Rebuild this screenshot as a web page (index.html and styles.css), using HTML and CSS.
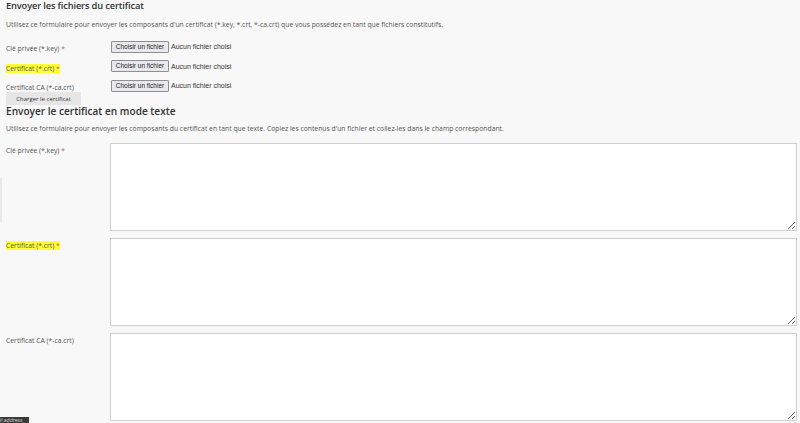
FILE: index.html
```html
<!DOCTYPE html>
<html lang="fr">
<head>
<meta charset="utf-8">
<link rel="stylesheet" href="styles.css">
</head>
<body>
<div class="page">
  <h2 class="title first">Envoyer les fichiers du certificat</h2>
  <p class="desc d1">Utilisez ce formulaire pour envoyer les composants d'un certificat (*.key, *.crt, *-ca.crt) que vous possédez en tant que fichiers constitutifs.</p>
  <div class="file-rows">
    <div class="frow">
      <label class="lbl">Clé privée (*.key) <span class="req">*</span></label>
      <div class="file"><span class="fbtn">Choisir un fichier</span><span class="fname">Aucun fichier choisi</span></div>
    </div>
    <div class="frow">
      <label class="lbl"><span class="hl">Certificat (*.crt) <span class="req">*</span></span></label>
      <div class="file"><span class="fbtn">Choisir un fichier</span><span class="fname">Aucun fichier choisi</span></div>
    </div>
    <div class="frow">
      <label class="lbl">Certificat CA (*-ca.crt)</label>
      <div class="file"><span class="fbtn">Choisir un fichier</span><span class="fname">Aucun fichier choisi</span></div>
    </div>
  </div>
  <button class="submit">Charger le certificat</button>
  <h2 class="title second">Envoyer le certificat en mode texte</h2>
  <p class="desc d2">Utilisez ce formulaire pour envoyer les composants du certificat en tant que texte. Copiez les contenus d'un fichier et collez-les dans le champ correspondant.</p>
  <div class="text-rows">
    <div class="trow">
      <label class="lbl">Clé privée (*.key) <span class="req">*</span></label>
      <textarea class="area"></textarea>
    </div>
    <div class="trow">
      <label class="lbl"><span class="hl">Certificat (*.crt) <span class="req">*</span></span></label>
      <textarea class="area"></textarea>
    </div>
    <div class="trow">
      <label class="lbl">Certificat CA (*-ca.crt)</label>
      <textarea class="area"></textarea>
    </div>
  </div>
</div>
<div class="edge"></div>
<div class="tip">il address</div>
</body>
</html>
```
FILE: styles.css
```css
html, body {
  margin: 0;
  padding: 0;
  background: #f8f8f8;
  height: 100%;
  overflow: hidden;
}
body {
  font-family: "Open Sans", "DejaVu Sans", sans-serif;
  color: #444;
  position: relative;
}
.page {
  padding: 0 4px 0 6px;
}
.title {
  font-weight: 600;
  color: #333;
  margin: 0;
  line-height: 14px;
}
.title.first {
  font-size: 9.3px;
  letter-spacing: -0.15px;
  margin-top: 0;
  line-height: 12px;
}
.title.second {
  font-size: 10.1px;
  margin-top: -1px;
}
.desc {
  font-size: 6.8px;
  line-height: 10px;
  color: #555;
  margin: 0;
  white-space: nowrap;
}
.d1 { margin-top: 8px; }
.d2 { margin-top: 6px; }
.file-rows {
  margin-top: 9px;
  display: flex;
  flex-direction: column;
  gap: 7.5px;
}
.frow {
  display: grid;
  grid-template-columns: 105px 1fr;
  align-items: center;
  height: 12px;
}
.lbl {
  font-size: 6.8px;
  color: #555;
  line-height: 10px;
}
.frow .lbl { padding-top: 5px; }
.req { color: #d9534f; }
.hl { background: #ffff33; }
.file {
  display: flex;
  align-items: center;
  gap: 2px;
  font-family: "Liberation Sans", Arial, sans-serif;
  font-size: 7px;
  color: #222;
}
.fbtn {
  display: inline-block;
  width: 56px;
  height: 10px;
  line-height: 10px;
  text-align: center;
  border: 1px solid #8f8f8f;
  border-radius: 1px;
  background: #e9e9ed;
  font-size: 6.5px;
}
.fname { color: #333; }
.submit {
  display: block;
  margin-top: 2px;
  width: 75px;
  height: 13px;
  padding: 0;
  border: none;
  background: #e6e6e6;
  font-family: "Open Sans", sans-serif;
  font-size: 6px;
  color: #333;
}
.text-rows {
  margin-top: 9px;
  display: flex;
  flex-direction: column;
  gap: 7px;
}
.trow {
  display: grid;
  grid-template-columns: 104px 1fr;
}
.trow .lbl { padding-top: 3px; }
.area {
  display: block;
  box-sizing: border-box;
  width: 687px;
  height: 88px;
  border: 1px solid #cfcfcf;
  background: #fff;
  margin: 0;
}
.edge {
  position: absolute;
  left: 0;
  top: 178px;
  width: 2px;
  height: 44px;
  background: #e9e9e9;
}
.tip {
  position: absolute;
  left: 0;
  top: 417px;
  width: 29px;
  height: 8px;
  background: #3a3a3a;
  color: #ddd;
  font-size: 5px;
  line-height: 7px;
  overflow: hidden;
  white-space: nowrap;
}
```
